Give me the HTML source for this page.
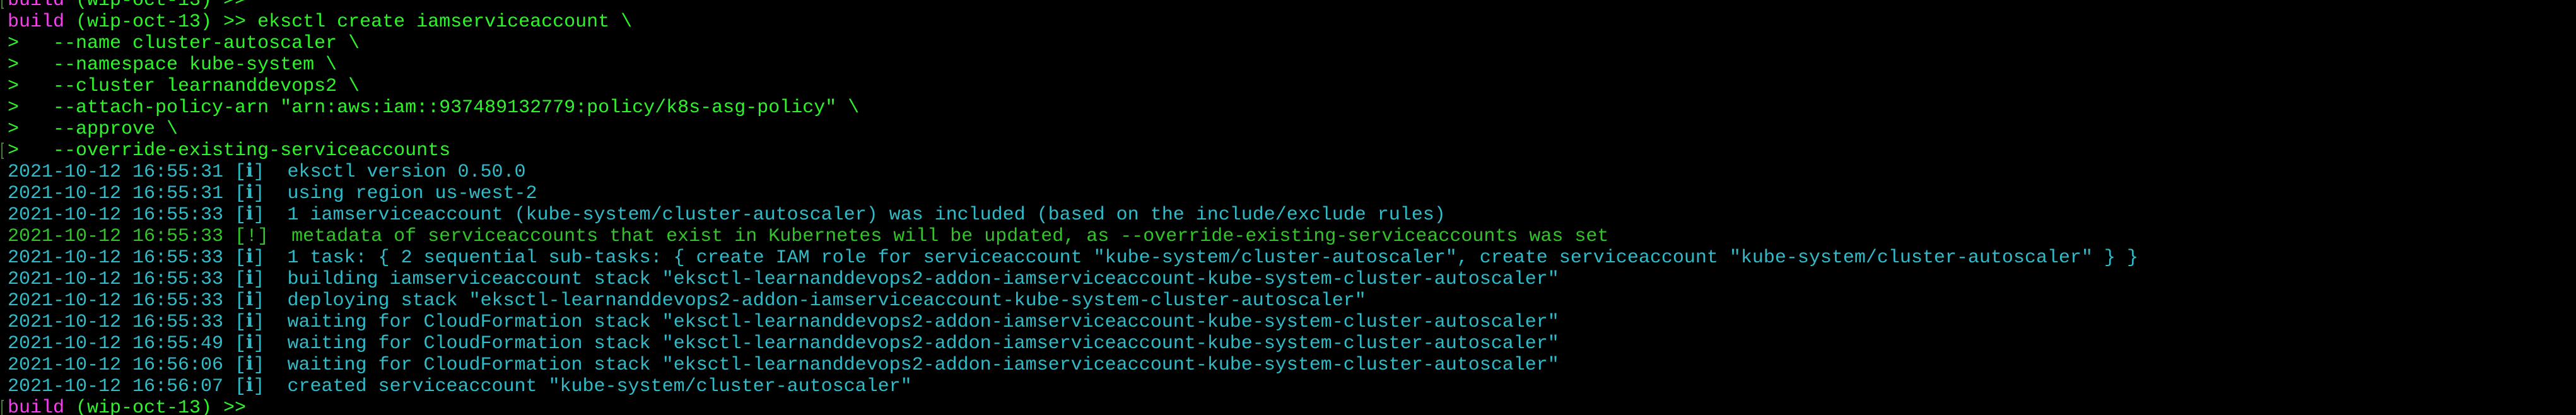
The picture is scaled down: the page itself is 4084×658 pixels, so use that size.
<!DOCTYPE html>
<html><head><meta charset="utf-8"><style>
html,body{margin:0;padding:0;background:#000;width:4084px;height:658px;overflow:hidden;position:relative}
pre{position:absolute;left:12px;top:-16px;margin:0;font-family:"Liberation Mono","DejaVu Sans Mono",monospace;font-size:30px;line-height:34px;color:#30bbc8;white-space:pre}
.m{color:#f93ff2}.g{color:#2ef52a}.w{color:#33c32a}.c{color:#30bbc8}
.br{position:absolute;left:2px;width:4px;height:26px;border:2px solid #4a7a3a;border-right:none;box-sizing:border-box}
</style></head><body>
<div class="br" style="top:-12px"></div>
<div class="br" style="top:226px"></div>
<div class="br" style="top:634px"></div>
<pre><span class="m">build</span><span class="g"> (wip-oct-13) &gt;&gt;</span>
<span class="m">build</span><span class="g"> (wip-oct-13) &gt;&gt; eksctl create iamserviceaccount \</span>
<span class="g">&gt;   --name cluster-autoscaler \</span>
<span class="g">&gt;   --namespace kube-system \</span>
<span class="g">&gt;   --cluster learnanddevops2 \</span>
<span class="g">&gt;   --attach-policy-arn "arn:aws:iam::937489132779:policy/k8s-asg-policy" \</span>
<span class="g">&gt;   --approve \</span>
<span class="g">&gt;   --override-existing-serviceaccounts</span>
2021-10-12 16:55:31 [ℹ]  eksctl version 0.50.0
2021-10-12 16:55:31 [ℹ]  using region us-west-2
2021-10-12 16:55:33 [ℹ]  1 iamserviceaccount (kube-system/cluster-autoscaler) was included (based on the include/exclude rules)
<span class="w">2021-10-12 16:55:33 [!]  metadata of serviceaccounts that exist in Kubernetes will be updated, as --override-existing-serviceaccounts was set</span>
2021-10-12 16:55:33 [ℹ]  1 task: { 2 sequential sub-tasks: { create IAM role for serviceaccount "kube-system/cluster-autoscaler", create serviceaccount "kube-system/cluster-autoscaler" } }
2021-10-12 16:55:33 [ℹ]  building iamserviceaccount stack "eksctl-learnanddevops2-addon-iamserviceaccount-kube-system-cluster-autoscaler"
2021-10-12 16:55:33 [ℹ]  deploying stack "eksctl-learnanddevops2-addon-iamserviceaccount-kube-system-cluster-autoscaler"
2021-10-12 16:55:33 [ℹ]  waiting for CloudFormation stack "eksctl-learnanddevops2-addon-iamserviceaccount-kube-system-cluster-autoscaler"
2021-10-12 16:55:49 [ℹ]  waiting for CloudFormation stack "eksctl-learnanddevops2-addon-iamserviceaccount-kube-system-cluster-autoscaler"
2021-10-12 16:56:06 [ℹ]  waiting for CloudFormation stack "eksctl-learnanddevops2-addon-iamserviceaccount-kube-system-cluster-autoscaler"
2021-10-12 16:56:07 [ℹ]  created serviceaccount "kube-system/cluster-autoscaler"
<span class="m">build</span><span class="g"> (wip-oct-13) &gt;&gt;</span></pre>
</body></html>
